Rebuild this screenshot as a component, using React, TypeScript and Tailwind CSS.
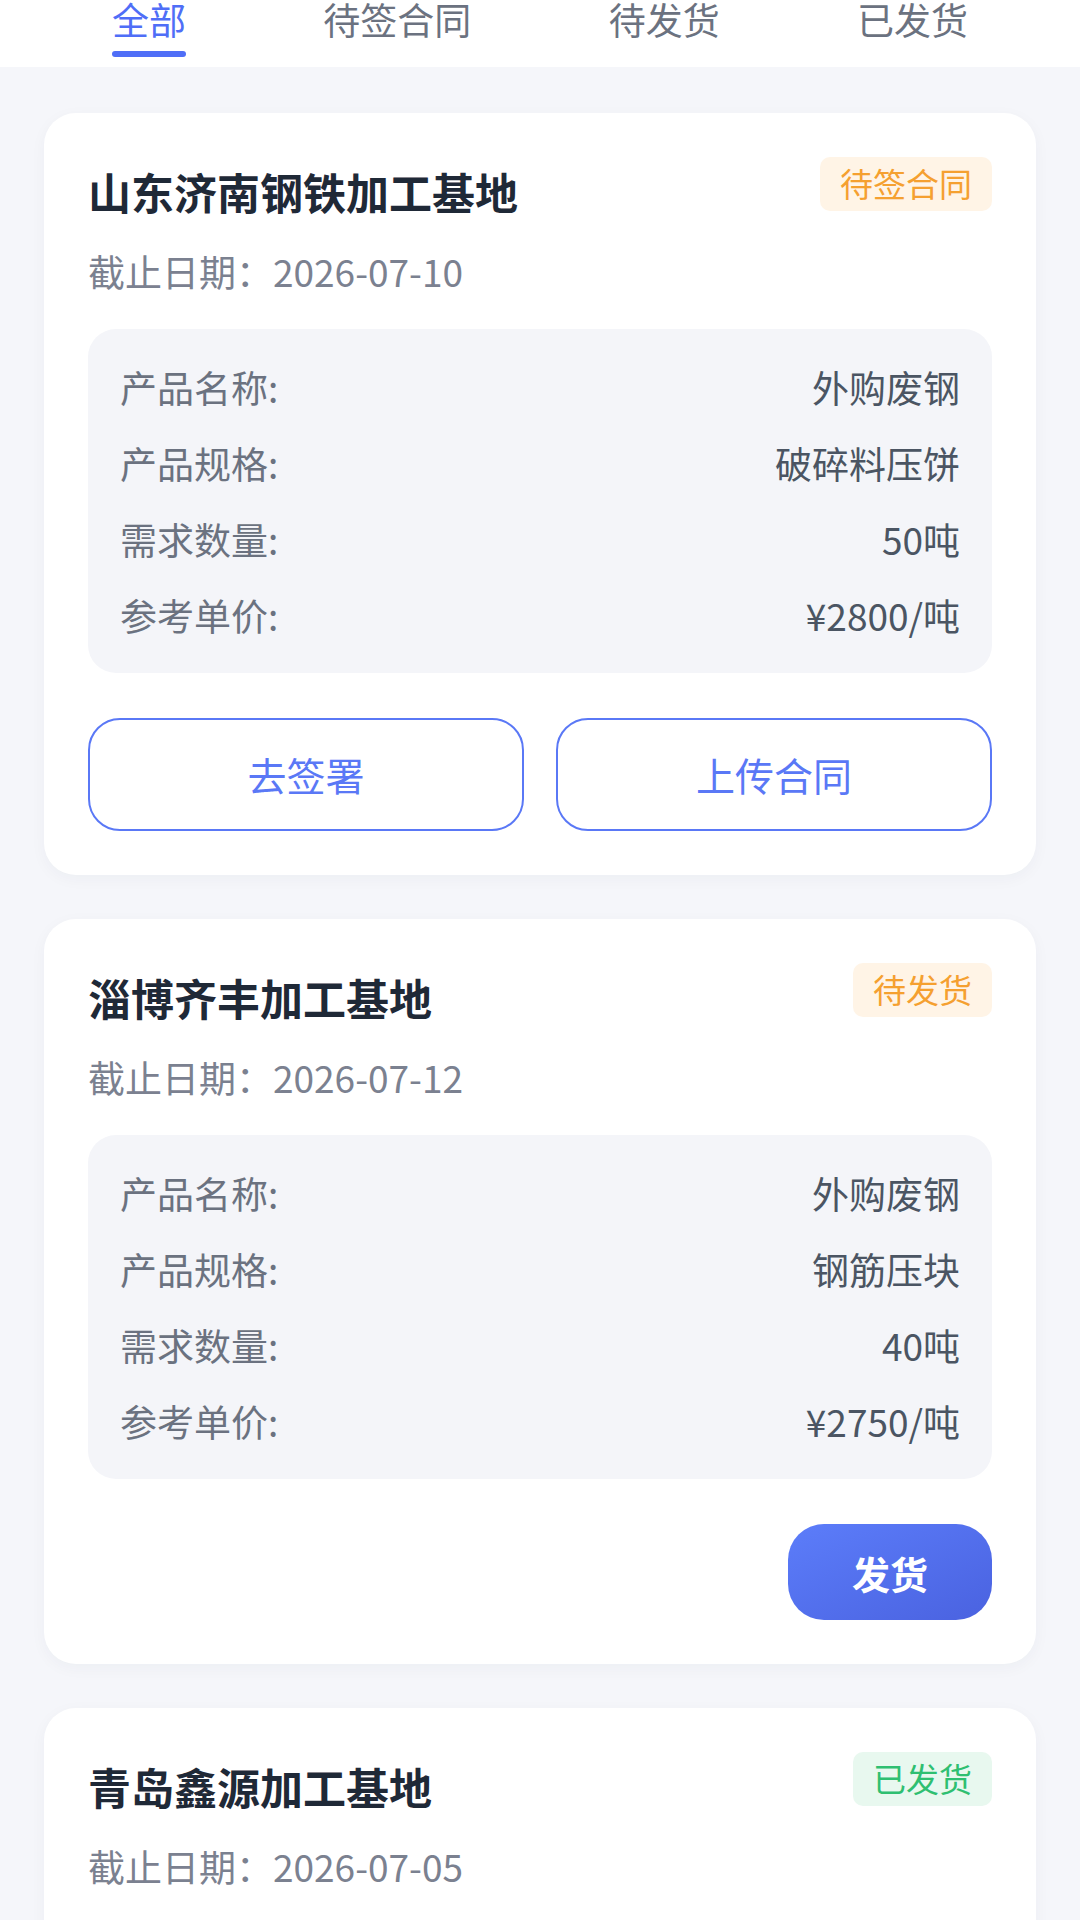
import React from 'react'

type Status = 'sign' | 'ship' | 'shipped'

interface Order {
  id: number
  base: string
  deadline: string
  status: Status
  product: string
  spec: string
  qty: string
  price: string
}

const tabs = ['全部', '待签合同', '待发货', '已发货']

const orders: Order[] = [
  {
    id: 1,
    base: '山东济南钢铁加工基地',
    deadline: '2026-07-10',
    status: 'sign',
    product: '外购废钢',
    spec: '破碎料压饼',
    qty: '50吨',
    price: '¥2800/吨',
  },
  {
    id: 2,
    base: '淄博齐丰加工基地',
    deadline: '2026-07-12',
    status: 'ship',
    product: '外购废钢',
    spec: '钢筋压块',
    qty: '40吨',
    price: '¥2750/吨',
  },
  {
    id: 3,
    base: '青岛鑫源加工基地',
    deadline: '2026-07-05',
    status: 'shipped',
    product: '外购废钢',
    spec: '重型废钢',
    qty: '60吨',
    price: '¥2900/吨',
  },
]

function StatusBadge({ status }: { status: Status }) {
  if (status === 'shipped') {
    return (
      <span className="flex h-[54px] items-center rounded-[10px] bg-[#e8f8ef] px-[20px] text-[33px] text-[#2fbf71]">
        已发货
      </span>
    )
  }
  return (
    <span className="flex h-[54px] items-center rounded-[10px] bg-[#fff4e6] px-[20px] text-[33px] text-[#f5a030]">
      {status === 'sign' ? '待签合同' : '待发货'}
    </span>
  )
}

function InfoRow({ label, value }: { label: string; value: string }) {
  return (
    <div className="flex items-center justify-between text-[37px] leading-[56px]">
      <span className="text-[#6b7280]">{label}:</span>
      <span className="text-[#4b5563]">{value}</span>
    </div>
  )
}

function OrderCard({ order }: { order: Order }) {
  return (
    <div className="rounded-[32px] bg-white p-[44px] shadow-[0_4px_16px_rgba(30,40,80,0.04)]">
      {/* header */}
      <div className="flex items-start justify-between">
        <h2 className="text-[43px] font-semibold leading-[68px] text-[#1f2937]">{order.base}</h2>
        <StatusBadge status={order.status} />
      </div>
      <p className="mt-[18px] text-[37px] leading-[56px] text-[#7b8190]">截止日期：{order.deadline}</p>

      {/* details */}
      <div className="mt-[30px] flex flex-col gap-[20px] rounded-[28px] bg-[#f4f5f9] px-[32px] py-[30px]">
        <InfoRow label="产品名称" value={order.product} />
        <InfoRow label="产品规格" value={order.spec} />
        <InfoRow label="需求数量" value={order.qty} />
        <InfoRow label="参考单价" value={order.price} />
      </div>

      {/* actions */}
      {order.status === 'sign' && (
        <div className="mt-[45px] flex gap-[32px]">
          <button className="h-[113px] flex-1 rounded-[32px] border-2 border-[#5a78f6] text-[39px] font-normal text-[#5a78f6]">
            去签署
          </button>
          <button className="h-[113px] flex-1 rounded-[32px] border-2 border-[#5a78f6] text-[39px] font-normal text-[#5a78f6]">
            上传合同
          </button>
        </div>
      )}
      {order.status === 'ship' && (
        <div className="mt-[45px] flex justify-end">
          <button className="h-[96px] w-[204px] rounded-[36px] bg-linear-to-br from-[#5c7dfa] to-[#4a62e0] text-[38px] font-semibold text-white">
            发货
          </button>
        </div>
      )}
    </div>
  )
}

export default function App() {
  return (
    <div className="min-h-screen bg-[#f5f6fa] font-['Noto_Sans_CJK_SC',sans-serif]">
      {/* Tabs */}
      <div className="flex justify-between bg-white px-[112px] pb-[10px]">
        {tabs.map((tab, i) => (
          <div key={tab} className="flex flex-col items-center">
            <span
              className={
                i === 0
                  ? 'text-[37px] leading-[38px] text-[#4f6ef7]'
                  : 'text-[37px] leading-[38px] text-[#6b7280]'
              }
            >
              {tab}
            </span>
            <span
              className={
                i === 0
                  ? 'mt-[13px] h-[6px] w-[74px] rounded-full bg-[#4f6ef7]'
                  : 'mt-[13px] h-[6px] w-[74px] rounded-full bg-transparent'
              }
            />
          </div>
        ))}
      </div>

      {/* Order list */}
      <div className="flex flex-col gap-[44px] px-[44px] pt-[46px] pb-[44px]">
        {orders.map((order) => (
          <OrderCard key={order.id} order={order} />
        ))}
      </div>
    </div>
  )
}
